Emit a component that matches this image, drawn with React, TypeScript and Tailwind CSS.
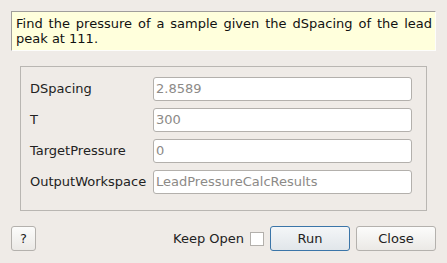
import React from 'react';

const fields = [
  { label: 'DSpacing', value: '2.8589' },
  { label: 'T', value: '300' },
  { label: 'TargetPressure', value: '0' },
  { label: 'OutputWorkspace', value: 'LeadPressureCalcResults' },
];

const btn =
  'h-[25px] rounded-[3px] border border-[#b4b1ad] bg-gradient-to-b from-[#fcfcfb] to-[#ebe9e6] text-[13px] text-[#222] flex items-center justify-center';

export default function App() {
  return (
    <div
      className="w-[447px] h-[263px] bg-[#efebe7] pt-[11px] px-[11px] flex flex-col text-[13px] text-[#222]"
      style={{ fontFamily: '"DejaVu Sans", sans-serif' }}
    >
      {/* description */}
      <div className="h-[40px] bg-[#ffffdc] border border-t-[#a09e9b] border-l-[#a09e9b] border-r-[#fdfdfb] border-b-[#fdfdfb] pl-[4px] pr-[3px] pt-[4px] leading-[15px] text-justify text-[#111]">
        Find the pressure of a sample given the dSpacing of the lead peak at 111.
      </div>

      {/* property group */}
      <div className="mt-[15px] mx-[9px] h-[145px] border border-[#b9b6b2] pt-[10px] pl-[9px] pr-[14px] flex flex-col gap-[7px]">
        {fields.map((f) => (
          <div key={f.label} className="flex items-center h-[24px]">
            <span className="w-[123px] shrink-0">{f.label}</span>
            <div className="flex-1 h-[24px] bg-white border border-[#b3b0ac] rounded-[3px] pl-[2px] flex items-center text-[#8c8a87]">
              {f.value}
            </div>
          </div>
        ))}
      </div>

      {/* footer */}
      <div className="mt-[15px] flex items-center h-[25px]">
        <button className={`${btn} w-[25px]`}>?</button>
        <div className="flex-1" />
        <span>Keep Open</span>
        <div className="ml-[6px] w-[14px] h-[14px] bg-white border border-[#b3b0ac]" />
        <button className="ml-[6px] w-[80px] h-[25px] rounded-[3px] border border-[#3b75a8] bg-gradient-to-b from-[#f4f6f8] to-[#e1e6ea] text-[13px] text-[#222] flex items-center justify-center">
          Run
        </button>
        <button className={`${btn} ml-[6px] w-[80px]`}>Close</button>
      </div>
    </div>
  );
}
